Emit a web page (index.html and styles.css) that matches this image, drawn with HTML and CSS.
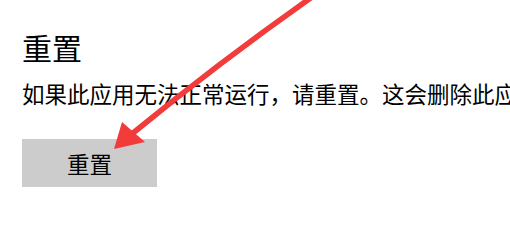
FILE: index.html
```html
<!DOCTYPE html>
<html lang="zh-CN">
<head>
<meta charset="utf-8">
<link rel="stylesheet" href="styles.css">
</head>
<body>
<main class="page">
  <h2 class="title">重置</h2>
  <p class="desc">如果此应用无法正常运行，请重置。这会删除此应用的数据。</p>
  <button class="btn">重置</button>
</main>
<svg class="arrow" width="510" height="239" viewBox="0 0 510 239">
  <path d="M312,-3 Q221,61 133,133" fill="none" stroke="#f23b3b" stroke-width="5.5" stroke-linecap="round"/>
  <polygon points="114,149 122,122 145,142" fill="#f23b3b"/>
</svg>
</body>
</html>
```

FILE: styles.css
```css
html, body {
  margin: 0;
  padding: 0;
  background: #ffffff;
  overflow: hidden;
}
.page {
  width: 510px;
  height: 239px;
  overflow: hidden;
  padding: 27px 0 0 22px;
  box-sizing: border-box;
  font-family: "Noto Sans CJK SC", "Noto Sans", sans-serif;
  color: #000000;
  display: flex;
  flex-direction: column;
  align-items: flex-start;
}
.title {
  margin: 0;
  font-size: 30px;
  line-height: 40px;
  font-weight: 400;
}
.desc {
  margin: 11px 0 0 0;
  font-size: 22.5px;
  line-height: 30px;
  white-space: nowrap;
}
.btn {
  margin-top: 31px;
  width: 135px;
  height: 48px;
  border: none;
  padding: 0;
  background: #cccccc;
  font-family: "Noto Sans CJK SC", "Noto Sans", sans-serif;
  font-size: 22.5px;
  line-height: 48px;
  color: #000000;
}
.arrow {
  position: absolute;
  left: 0;
  top: 0;
  pointer-events: none;
}
```
